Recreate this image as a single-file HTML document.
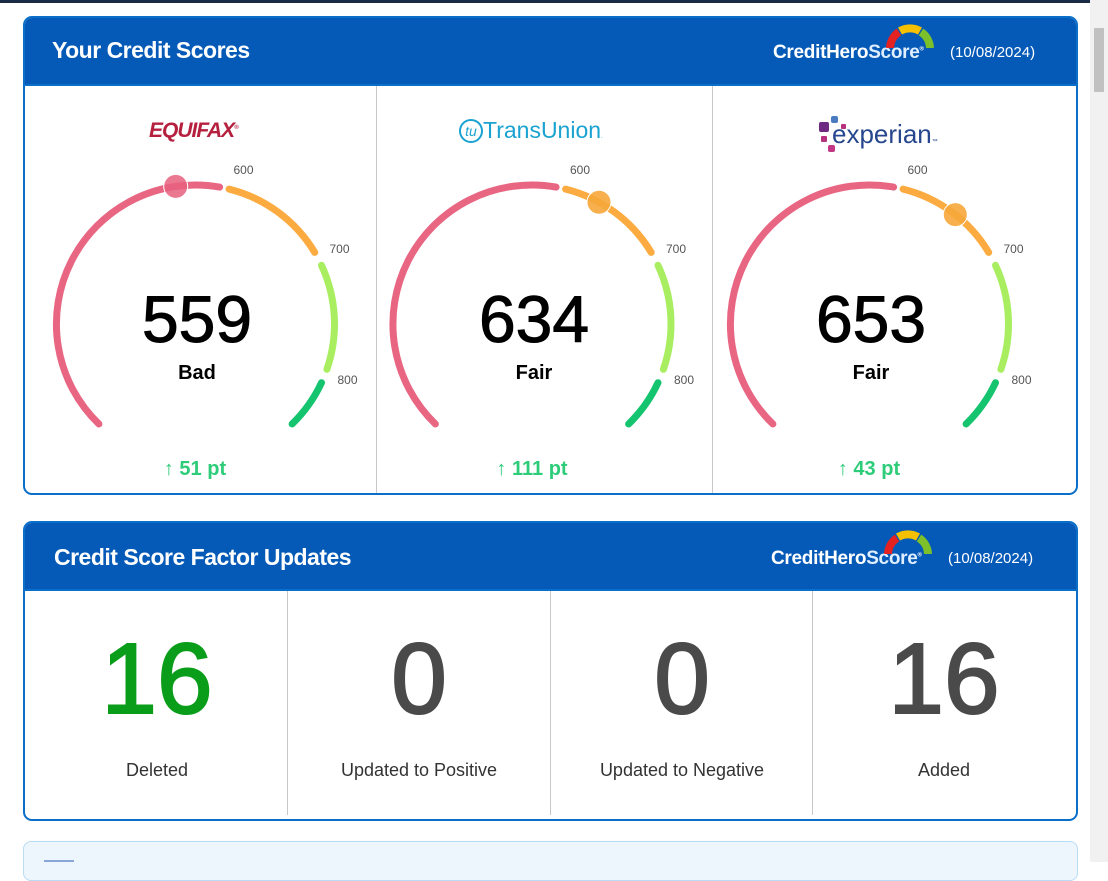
<!DOCTYPE html>
<html><head><meta charset="utf-8">
<style>
*{margin:0;padding:0;box-sizing:border-box}
body{width:1108px;height:862px;background:#fff;font-family:"Liberation Sans",sans-serif;position:relative;overflow:hidden}
.topbar{position:absolute;left:0;top:0;width:1090px;height:3px;background:#1b2a45}
.scroll{position:absolute;right:0;top:0;width:18px;height:862px;background:#f1f1f1}
.thumb{position:absolute;right:4px;top:28px;width:10px;height:64px;background:#c1c1c1}
.card{position:absolute;left:23px;width:1055px;border:2px solid #0a6fc9;border-radius:9px;overflow:hidden;background:#fff}
.hdr{position:absolute;left:0;top:0;right:0;background:#0559b7;color:#fff;border-bottom:2px solid #0a6fc9}
.hdr h2{position:absolute;left:27px;font-size:23px;font-weight:bold;letter-spacing:-0.5px}
.logo{position:absolute;font-weight:bold;font-size:19px;letter-spacing:-0.3px}
.logo .s{color:#dfefff}
.date{position:absolute;font-size:15px}
.col{position:absolute;top:0;bottom:0;border-left:1px solid #c8c8c8}
.num{position:absolute;width:260px;text-align:center;font-size:100px;color:#4a4a4a;line-height:1;-webkit-text-stroke:2px currentColor}
.lab{position:absolute;width:260px;text-align:center;font-size:18px;color:#333}
.sc{position:absolute;width:200px;text-align:center;font-size:66px;color:#000;line-height:1;-webkit-text-stroke:1px #000}
.rt{position:absolute;width:200px;text-align:center;font-size:20px;font-weight:bold;color:#000}
.pt{position:absolute;width:200px;text-align:center;font-size:20px;font-weight:bold;color:#2dcc79}
.tk{font-size:12px;fill:#555;font-family:"Liberation Sans",sans-serif}
</style></head><body>
<div class="topbar"></div>
<div class="scroll"><div class="thumb"></div></div>

<div class="card" style="top:16px;height:479px">
  <div class="hdr" style="height:68px">
    <h2 style="top:19px">Your Credit Scores</h2>
    <div class="logo" style="left:748px;top:24px">CreditHero<span class="s">Score</span><sup style="font-size:6px">®</sup></div>
    <svg style="position:absolute;left:860px;top:6px" width="50" height="24" viewBox="0 0 50 24">
      <path d="M5 24 A20 20 0 0 1 14 8" stroke="#e52222" stroke-width="8" fill="none"/>
      <path d="M15 7 A20 20 0 0 1 35 7" stroke="#f5c000" stroke-width="8" fill="none"/>
      <path d="M36 8 A20 20 0 0 1 45 24" stroke="#7cc02a" stroke-width="8" fill="none"/>
    </svg>
    <div class="date" style="left:925px;top:26px">(10/08/2024)</div>
  </div>
  <div class="col" style="left:351px;top:68px"></div>
  <div class="col" style="left:687px;top:68px"></div>
  <div style="position:absolute;left:124px;top:101px;font-size:21px;font-weight:bold;font-style:italic;color:#b5203f;letter-spacing:-1px">EQUIFAX<sup style="font-size:6px">®</sup></div>
  <div style="position:absolute;left:434px;top:99px;font-size:23px;color:#1aa3d0"><span style="display:inline-block;width:24px;height:24px;border:2px solid #1aa3d0;border-radius:50%;font-size:14px;text-align:center;line-height:20px;font-style:italic;vertical-align:2px">tu</span>TransUnion<span style="font-size:6px">.</span></div>
  <div style="position:absolute;left:794px;top:94px">
    <div style="position:absolute;left:0;top:10px;width:10px;height:10px;background:#6e2a83;border-radius:2px"></div>
    <div style="position:absolute;left:12px;top:4px;width:7px;height:7px;background:#4a7ac0;border-radius:2px"></div>
    <div style="position:absolute;left:22px;top:12px;width:5px;height:5px;background:#b8317f;border-radius:1px"></div>
    <div style="position:absolute;left:2px;top:24px;width:6px;height:6px;background:#b8317f;border-radius:1px"></div>
    <div style="position:absolute;left:9px;top:33px;width:7px;height:7px;background:#c33585;border-radius:2px"></div>
    <div style="position:absolute;left:13px;top:7px;font-size:26px;color:#26478d;white-space:nowrap">experian<span style="font-size:6px">™</span></div>
  </div>
  <div class="sc" style="left:72px;top:268px">559</div>
  <div class="rt" style="left:72px;top:344px">Bad</div>
  <div class="pt" style="left:70px;top:440px">↑ 51 pt</div>
  <div class="sc" style="left:409px;top:268px">634</div>
  <div class="rt" style="left:409px;top:344px">Fair</div>
  <div class="pt" style="left:407px;top:440px">↑ 111 pt</div>
  <div class="sc" style="left:746px;top:268px">653</div>
  <div class="rt" style="left:746px;top:344px">Fair</div>
  <div class="pt" style="left:744px;top:440px">↑ 43 pt</div>
</div>

<svg style="position:absolute;left:0;top:0" width="1108" height="862">
  <defs>
    <g id="arcs" fill="none" stroke-width="7" stroke-linecap="round">
      <path d="M-96.6 100 A139 139 0 0 1 24.1 -136.9" stroke="#e96683"/>
      <path d="M33.6 -134.9 A139 139 0 0 1 119.2 -71.6" stroke="#fbab3f"/>
      <path d="M126 -58.7 A139 139 0 0 1 131.4 45.3" stroke="#a8ee60"/>
      <path d="M126 58.7 A139 139 0 0 1 96.6 100" stroke="#14c46e"/>
      <text class="tk" x="48" y="-150" text-anchor="middle">600</text>
      <text class="tk" x="144" y="-71" text-anchor="middle">700</text>
      <text class="tk" x="152" y="60" text-anchor="middle">800</text>
    </g>
  </defs>
  <g transform="translate(195.5 324)"><use href="#arcs"/><circle cx="-19.8" cy="-137.6" r="12" fill="#e8607e" fill-opacity="0.85" stroke="#fff" stroke-width="1"/></g>
  <g transform="translate(532 324)"><use href="#arcs"/><circle cx="67" cy="-121.8" r="12" fill="#f6a73a" fill-opacity="0.9" stroke="#fff" stroke-width="1"/></g>
  <g transform="translate(869.5 324)"><use href="#arcs"/><circle cx="85.8" cy="-109.4" r="12" fill="#f6a73a" fill-opacity="0.9" stroke="#fff" stroke-width="1"/></g>
</svg>

<div class="card" style="top:521px;height:300px">
  <div class="hdr" style="height:68px">
    <h2 style="top:21px;left:29px">Credit Score Factor Updates</h2>
    <div class="logo" style="left:746px;top:25px">CreditHero<span class="s">Score</span><sup style="font-size:6px">®</sup></div>
    <svg style="position:absolute;left:858px;top:7px" width="50" height="24" viewBox="0 0 50 24">
      <path d="M5 24 A20 20 0 0 1 14 8" stroke="#e52222" stroke-width="8" fill="none"/>
      <path d="M15 7 A20 20 0 0 1 35 7" stroke="#f5c000" stroke-width="8" fill="none"/>
      <path d="M36 8 A20 20 0 0 1 45 24" stroke="#7cc02a" stroke-width="8" fill="none"/>
    </svg>
    <div class="date" style="left:923px;top:27px">(10/08/2024)</div>
  </div>
  <div class="col" style="left:262px;top:68px;bottom:4px"></div>
  <div class="col" style="left:525px;top:68px;bottom:4px"></div>
  <div class="col" style="left:787px;top:68px;bottom:4px"></div>
  <div class="num" style="left:2px;top:106px;color:#0a9d1a">16</div>
  <div class="num" style="left:264px;top:106px">0</div>
  <div class="num" style="left:527px;top:106px">0</div>
  <div class="num" style="left:789px;top:106px">16</div>
  <div class="lab" style="left:2px;top:237px">Deleted</div>
  <div class="lab" style="left:264px;top:237px">Updated to Positive</div>
  <div class="lab" style="left:527px;top:237px">Updated to Negative</div>
  <div class="lab" style="left:789px;top:237px">Added</div>
</div>

<div style="position:absolute;left:23px;top:841px;width:1055px;height:40px;background:#eef6fd;border:1px solid #b9dcf3;border-radius:8px"></div>
<div style="position:absolute;left:44px;top:860px;width:30px;height:2px;background:#8aa6d8"></div>
</body></html>
